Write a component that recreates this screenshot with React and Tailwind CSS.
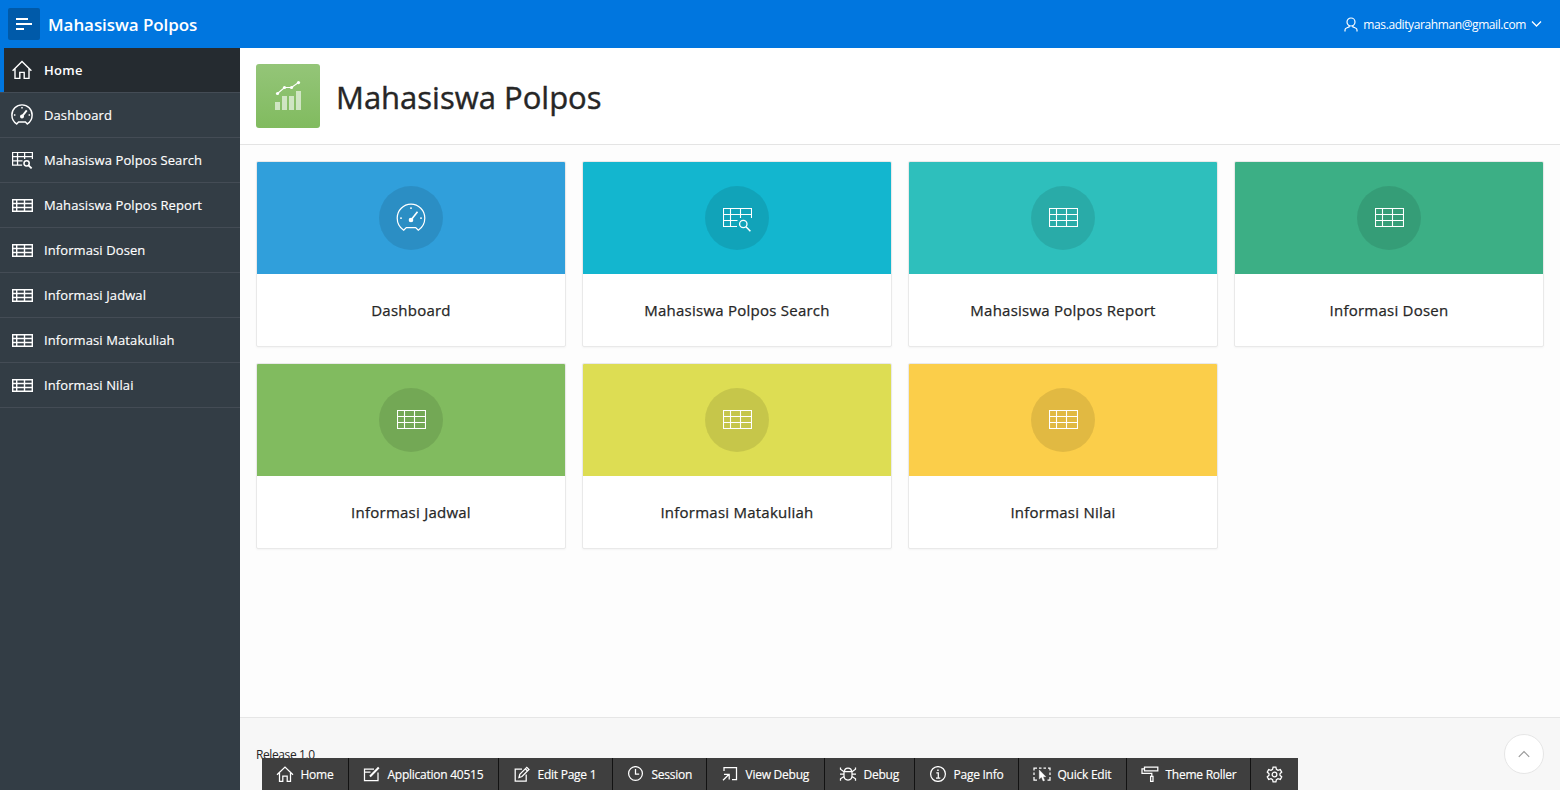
const stroke = { fill: 'none', stroke: 'currentColor' };

function HomeIcon({ className }) {
  return (
    <svg className={className} viewBox="0 0 20 20" {...stroke} strokeWidth="1.4">
      <path d="M.6 10.7 10 1.5l9.4 9.2M3 8.8v9.6h4.8v-6h4.4v6H17V8.8" />
    </svg>
  );
}

function GaugeIcon({ className, weight = 1 }) {
  return (
    <svg className={className} viewBox="0 0 30 30" {...stroke} strokeWidth={weight}>
      <path d="M7.7 27.2C3.8 24.600 1.200 20.100 1.200 15a13.800 13.800 0 0 1 27.600 0c0 5.100-2.600 9.600-6.500 12.200l-2.600-2.700h-9.400z" />
      <path d="M15 17 21.500 8.800" strokeWidth={weight * 1.3} />
      <circle cx="15" cy="17" r="1.700" fill="currentColor" />
      <path d="M14 5h2M4 15h2M24 15h2" />
    </svg>
  );
}

function TableIcon({ className, small }) {
  return small ? (
    <svg className={className} viewBox="0 0 21 13" {...stroke} strokeWidth="1.400">
      <path d="M.7.7h19.600v11.600H.7zM.7 4.500h19.600M.7 8.500h19.600M4.700.7v11.600M12.500.7v11.600" />
    </svg>
  ) : (
    <svg className={className} viewBox="0 0 29 19" {...stroke} strokeWidth="1.100">
      <path d="M.5.5h28v18H.5zM.5 6.500h28M.5 12.500h28M7.500.5v18M17.500.5v18" />
    </svg>
  );
}

function TableSearchIcon({ className, weight = 1.1 }) {
  return (
    <svg className={className} viewBox="0 0 29 24" {...stroke} strokeWidth={weight}>
      <path d="M14 18.500H.5V.5h28v9.500M.5 6.500h28M.5 12.500h14M7.500.5v18M17.500.5v9.500" />
      <circle cx="20.300" cy="16" r="3.700" strokeWidth={weight * 1.2} />
      <path d="m23 18.800 4.400 4.400" strokeWidth={weight * 1.4} />
    </svg>
  );
}

function ChartIcon() {
  return (
    <svg className="h-[30px] w-7" viewBox="0 0 28 30">
      <path d="M1 21h5v8H1zM8 15h5v14H8zM15 15h5v14h-5zM22 10h5v19h-5z" fill="#fff" opacity=".6" />
      <path d="M3.500 12.500 10.500 6.500H17.500L24.500 1.500" fill="none" stroke="#fff" strokeWidth="1.100" />
      <g fill="#fff">
        <circle cx="3.500" cy="12.500" r="1.600" />
        <circle cx="10.500" cy="6.500" r="1.600" />
        <circle cx="17.500" cy="6.500" r="1.600" />
        <circle cx="24.500" cy="1.600" r="1.600" />
      </g>
    </svg>
  );
}

function ToolIcon({ children }) {
  return (
    <svg className="h-4 w-[18px] shrink-0" viewBox="0 0 18 16" {...stroke} strokeWidth="1.250">
      {children}
    </svg>
  );
}

const nav = [
  { label: 'Dashboard', icon: 'gauge', color: 'bg-[#309fdb]' },
  { label: 'Mahasiswa Polpos Search', icon: 'search', color: 'bg-[#13b6cf]' },
  { label: 'Mahasiswa Polpos Report', icon: 'table', color: 'bg-[#2ebfbc]' },
  { label: 'Informasi Dosen', icon: 'table', color: 'bg-[#3caf85]' },
  { label: 'Informasi Jadwal', icon: 'table', color: 'bg-[#81bb5f]' },
  { label: 'Informasi Matakuliah', icon: 'table', color: 'bg-[#dddd53]' },
  { label: 'Informasi Nilai', icon: 'table', color: 'bg-[#fbce4a]' },
];

function NavIcon({ icon }) {
  if (icon === 'gauge') return <GaugeIcon className="h-[22px] w-[22px]" weight={2} />;
  if (icon === 'search') return <TableSearchIcon className="mt-px h-[17px] w-[21px]" weight={1.8} />;
  return <TableIcon small className="mt-px h-[13px] w-[21px]" />;
}

function CardIcon({ icon }) {
  if (icon === 'gauge') return <GaugeIcon className="h-[30px] w-[30px]" weight={1.25} />;
  if (icon === 'search') return <TableSearchIcon className="mt-1 h-6 w-[29px]" />;
  return <TableIcon className="mb-px h-[19px] w-[29px]" />;
}

const tools = [
  {
    label: 'Home',
    width: 'w-[87px]',
    icon: <path d="M1 8.700 9 1l8 7.700M3.500 7v8.300h3.300V10h4.400v5.300h3.300V7" />,
  },
  {
    label: 'Application 40515',
    width: 'w-[150px]',
    icon: (
      <>
        <path d="M11 3H1.500v11.500H15V6.500M1.500 6h6" />
        <path d="m7 10.500 8.800-9" strokeWidth="2" />
      </>
    ),
  },
  {
    label: 'Edit Page 1',
    width: 'w-[114px]',
    icon: (
      <path d="M9 3H2.200v12h11V8.500M6 11.500l.8-3.200 7-7L16 3.500l-7 7zM12.300 2.800 14.500 5" />
    ),
  },
  {
    label: 'Session',
    width: 'w-[94px]',
    icon: (
      <>
        <circle cx="8.500" cy="7.500" r="6.900" />
        <path d="M8.500 3v5h3.700" />
      </>
    ),
  },
  {
    label: 'View Debug',
    width: 'w-[118px]',
    icon: <path d="M3 5V1.600h12.500v12H11M2 14.300l6-6M3 8.300h5.200v5.200" />,
  },
  {
    label: 'Debug',
    width: 'w-[90px]',
    icon: (
      <path d="M5.500 5.500Q5.500 2 9 2t3.500 3.500zM5 5.500h8v4.300q0 4.200-4 4.200T5 9.800zM1 8h4M13 8h4M1.500 1.500v1.800L5 5.800M16.500 1.500v1.800L13 5.800M1.500 14.800v-2L5 10.500M16.500 14.800v-2L13 10.500" />
    ),
  },
  {
    label: 'Page Info',
    width: 'w-[104px]',
    icon: (
      <>
        <circle cx="9" cy="8" r="7.400" />
        <path d="M7.300 6.800h2V12M7 12h4.300" />
        <path d="M8.200 4.300h1.500" strokeWidth="1.500" />
      </>
    ),
  },
  {
    label: 'Quick Edit',
    width: 'w-[108px]',
    icon: (
      <>
        <path d="M1 4.500V2h3M6 2h2.500M10.500 2H13M15 2h2v2.500M17 6.500V9M17 11v3h-2.500M1 6.500V9M1 11v3h3" />
        <path d="M6.300 4v9l2.200-2 1.600 4 1.500-.6-1.600-3.700h2.800z" fill="currentColor" strokeWidth=".4" />
      </>
    ),
  },
  {
    label: 'Theme Roller',
    width: 'w-[124px]',
    icon: <path d="M3.500 1h13.300v3.800H3.500zM3.500 2.800H1v4.500h9.800v3M9.600 10.300H12v5H9.600z" />,
  },
];

export default function App() {
  return (
    <div className="flex h-[790px] w-[1560px] flex-col overflow-hidden bg-[#fdfdfd] font-['Open_Sans','Noto_Sans',sans-serif] text-[#262626]">
      <header className="flex h-12 shrink-0 items-center bg-[#0076df] pl-2 pr-[18px] text-white">
        <button className="flex h-8 w-8 items-center justify-center rounded-[2px] bg-[#005aa9]">
          <svg className="h-4 w-4" viewBox="0 0 16 16" {...stroke} strokeWidth="2">
            <path d="M0 3h12M0 8h16M0 13h8" />
          </svg>
        </button>
        <h1 className="ml-2 pt-0.5 text-[17px] font-semibold tracking-[-0.07px]">Mahasiswa Polpos</h1>
        <div className="ml-auto flex items-center">
          <svg className="h-[15px] w-[14px]" viewBox="0 0 14 15" {...stroke} strokeWidth="1.200">
            <circle cx="7" cy="5" r="4" />
            <path d="M1 14.500V13q0-1.500 1.500-2l2.700-1.100V8.500M13 14.500V13q0-1.500-1.500-2L8.800 9.900V8.500" />
          </svg>
          <span className="ml-[5px] pt-0.5 text-[12px] tracking-[-0.4px]">mas.adityarahman@gmail.com</span>
          <svg className="ml-[5px] h-2 w-[11px]" viewBox="0 0 11 8" {...stroke} strokeWidth="1.300">
            <path d="M1 1.500 5.500 6 10 1.500" />
          </svg>
        </div>
      </header>

      <div className="flex min-h-0 flex-1">
        <nav className="w-60 shrink-0 bg-[#333d45] text-[13px] text-white">
          <div className="flex h-[45px] items-center border-b border-[#444c55] bg-[#252b30]">
            <span className="h-full w-1 bg-[#0076df]" />
            <HomeIcon className="ml-2 h-5 w-5" />
            <span className="ml-3 pt-0.5 font-semibold tracking-[0.3px]">Home</span>
          </div>
          {nav.map((item) => (
            <div key={item.label} className="flex h-[45px] items-center border-b border-[#444c55] pl-[11px]">
              <span className="flex w-[22px] justify-center">
                <NavIcon icon={item.icon} />
              </span>
              <span className="ml-[11px] pt-0.5 whitespace-nowrap tracking-[0.1px] [-webkit-text-stroke:0.15px]">
                {item.label}
              </span>
            </div>
          ))}
        </nav>

        <div className="flex min-w-0 flex-1 flex-col">
          <div className="flex h-[97px] shrink-0 items-center border-b border-[#e4e4e4] bg-white px-4">
            <div className="flex h-16 w-16 items-center justify-center rounded-[3px] bg-linear-to-b from-[#94c578] to-[#81bb5f]">
              <ChartIcon />
            </div>
            <h2 className="ml-4 pt-0.5 text-[31px] leading-10 [-webkit-text-stroke:0.4px]">Mahasiswa Polpos</h2>
          </div>

          <main className="grid grid-cols-4 gap-4 p-4">
            {nav.map((item) => (
              <article
                key={item.label}
                className="flex h-[186px] flex-col overflow-hidden rounded-[2px] border border-[#e9e9e9] bg-white shadow-[0_1px_2px_rgba(0,0,0,0.04)]"
              >
                <div className={`flex h-28 items-center justify-center ${item.color}`}>
                  <span className="flex h-16 w-16 items-center justify-center rounded-full bg-black/10 text-white">
                    <CardIcon icon={item.icon} />
                  </span>
                </div>
                <h3 className="flex flex-1 items-center justify-center text-[15px] tracking-[0.24px] [-webkit-text-stroke:0.25px]">
                  {item.label}
                </h3>
              </article>
            ))}
          </main>

          <footer className="relative mt-auto flex h-[73px] shrink-0 justify-between border-t border-[#e6e6e6] bg-[#f7f7f7] px-4 pt-4">
            <span className="mt-3 text-[12px] leading-[18px] tracking-[-0.4px]">Release 1.0</span>
            <button className="flex h-10 w-10 items-center justify-center rounded-full border border-[#e6e6e6] bg-white text-[#999]">
              <svg className="h-2 w-3" viewBox="0 0 12 8" {...stroke} strokeWidth="1.200">
                <path d="M.8 6.800 6 1.500l5.200 5.300" />
              </svg>
            </button>
            <div className="absolute bottom-0 left-[22px] flex h-8 bg-[#3f3f3f] text-[12px] text-white">
              {tools.map((tool) => (
                <div
                  key={tool.label}
                  className={`flex items-center border-r border-[#121212] pl-[14px] whitespace-nowrap ${tool.width}`}
                >
                  <ToolIcon>{tool.icon}</ToolIcon>
                  <span className="ml-[6.500px] pt-0.5 tracking-[-0.25px] [-webkit-text-stroke:0.15px]">{tool.label}</span>
                </div>
              ))}
              <div className="flex w-[47px] items-center justify-center">
                <svg className="h-[17px] w-[17px]" viewBox="0 0 24 24" {...stroke} strokeWidth="1.800">
                  <circle cx="12" cy="12" r="3.300" />
                  <path d="M10 1.500h4l.7 3.300 2.200 1.300 3.300-1 2 3.500-2.500 2.300v2.200l2.500 2.300-2 3.500-3.300-1-2.200 1.300-.7 3.300h-4l-.7-3.300-2.200-1.300-3.300 1-2-3.500 2.500-2.300v-2.200L1.800 8.600l2-3.500 3.300 1 2.200-1.300z" />
                </svg>
              </div>
            </div>
          </footer>
        </div>
      </div>
    </div>
  );
}
